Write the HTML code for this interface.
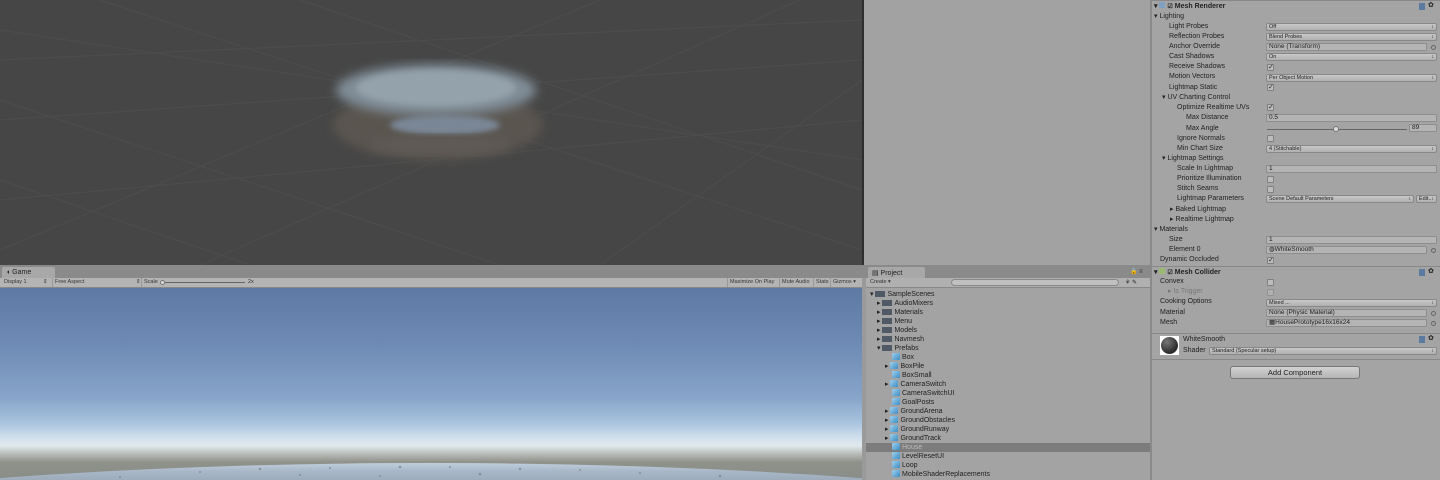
<!DOCTYPE html>
<html><head><meta charset="utf-8"><style>
*{margin:0;padding:0;box-sizing:border-box}
html,body{width:1440px;height:480px;overflow:hidden}
body{background:#a2a2a2;font-family:"Liberation Sans",sans-serif;font-size:7px;color:#1e1e1e;position:relative}
.a{position:absolute;white-space:nowrap}
.lbl{position:absolute;white-space:nowrap;line-height:10px;font-size:7px;color:#222}
.fld{position:absolute;height:8px;background:#b4b4b4;border:1px solid #8e8e8e;border-radius:1px;font-size:6px;line-height:6px;padding-left:2px;color:#222}
.dd{position:absolute;height:8px;background:linear-gradient(#c8c8c8,#b0b0b0);border:1px solid #888;border-radius:2px;font-size:5.5px;line-height:6px;padding-left:2px;color:#222}
.dd:after{content:"↕";position:absolute;right:2px;top:0;font-size:5px}
.cb{position:absolute;width:7px;height:7px;background:#bdbdbd;border:1px solid #808080;border-radius:1px;font-size:7px;line-height:5px;color:#222;text-align:center}
.dot{position:absolute;width:5px;height:5px;border:1px solid #666;border-radius:50%}
.row{position:absolute;left:870px;font-size:7px;line-height:9px;white-space:nowrap;color:#1e1e1e}
.fold{display:inline-block;width:10px;height:6px;background:#505a66;margin-right:2px;vertical-align:-1px}
.cube{display:inline-block;width:8px;height:7px;background:linear-gradient(135deg,#9fd0ee,#3c8cc4);margin-right:2px;vertical-align:-1px;border-radius:1px}
#wrap{position:absolute;left:0;top:0;width:1440px;height:480px;overflow:hidden}
</style></head><body><div id="wrap">
<!-- Scene view -->
<div class="a" style="left:0;top:0;width:862px;height:265px;background:#464646;overflow:hidden">
<svg width="862" height="265" style="position:absolute;left:0;top:0">
<g stroke="#4d4d4d" stroke-width="1" fill="none">
<line x1="0" y1="60" x2="862" y2="20"/><line x1="0" y1="120" x2="862" y2="60"/><line x1="0" y1="200" x2="862" y2="120"/>
<line x1="0" y1="30" x2="862" y2="160"/><line x1="100" y1="0" x2="862" y2="250"/><line x1="300" y1="0" x2="862" y2="190"/>
<line x1="0" y1="100" x2="500" y2="265"/><line x1="0" y1="180" x2="250" y2="265"/>
<line x1="600" y1="0" x2="0" y2="250"/><line x1="800" y1="0" x2="200" y2="265"/><line x1="862" y1="80" x2="600" y2="265"/>
</g>
<defs><filter id="f"><feGaussianBlur stdDeviation="5"/></filter><filter id="g"><feGaussianBlur stdDeviation="3"/></filter></defs>
<ellipse cx="438" cy="125" rx="105" ry="35" fill="#5a5550" filter="url(#f)"/>
<ellipse cx="436" cy="90" rx="100" ry="26" fill="#7f8c96" filter="url(#f)"/>
<ellipse cx="436" cy="88" rx="80" ry="18" fill="#94a2ac" filter="url(#g)"/>
<ellipse cx="445" cy="125" rx="55" ry="10" fill="#7a8796" filter="url(#g)"/>
<ellipse cx="440" cy="145" rx="70" ry="10" fill="#5e5a56" filter="url(#f)"/>
</svg></div>
<div class="a" style="left:862px;top:0;width:2px;height:265px;background:#2e2e2e"></div>
<!-- tab bars -->
<div class="a" style="left:0;top:265px;width:866px;height:13px;background:#8a8a8a"></div>
<div class="a" style="left:2px;top:267px;width:53px;height:11px;background:#a8a8a8;border-radius:2px 2px 0 0;padding:2px 0 0 4px;font-size:7px">◖ Game</div>
<div class="a" style="left:0;top:278px;width:862px;height:10px;background:#b4b4b4;border-bottom:1px solid #888;font-size:5.5px;line-height:9px;color:#333">
<span class="a" style="left:4px">Display 1</span><span class="a" style="left:43px">⇕</span>
<span class="a" style="left:52px;border-left:1px solid #999;padding-left:2px">Free Aspect</span><span class="a" style="left:136px">⇕</span>
<span class="a" style="left:141px;border-left:1px solid #999;padding-left:2px">Scale</span>
<span class="a" style="left:160px;top:4px;width:85px;height:1px;background:#666"></span>
<span class="a" style="left:160px;top:2px;width:5px;height:5px;border-radius:50%;background:#ddd;border:1px solid #777"></span>
<span class="a" style="left:248px">2x</span>
<span class="a" style="left:727px;border-left:1px solid #999;padding-left:2px">Maximize On Play</span>
<span class="a" style="left:779px;border-left:1px solid #999;padding-left:2px">Mute Audio</span>
<span class="a" style="left:813px;border-left:1px solid #999;padding-left:2px">Stats</span>
<span class="a" style="left:830px;border-left:1px solid #999;padding-left:2px">Gizmos ▾</span>
</div>
<!-- Game view -->
<div class="a" style="left:0;top:288px;width:862px;height:192px;overflow:hidden;background:linear-gradient(#5e7aa4 0px,#6f8cb6 60px,#87a4c9 110px,#a9c4df 135px,#d6e4ee 152px,#e0e8ec 158px,#b8bcb8 166px,#8f918a 174px,#8a8c88 192px)">
<div class="a" style="left:-470px;top:175px;width:1800px;height:248px;border-radius:50%;background:linear-gradient(#c0cedc,#a8b8c8 8px,#9aa8b6 20px)"></div>
<svg class="a" style="left:0;top:175px" width="862" height="17"><g fill="#6c7680" opacity=".6">
<circle cx="120" cy="14" r="1"/><circle cx="200" cy="9" r="1"/><circle cx="260" cy="6" r="1.2"/><circle cx="330" cy="5" r="1"/><circle cx="400" cy="4" r="1.3"/><circle cx="450" cy="4" r="1"/><circle cx="520" cy="6" r="1.2"/><circle cx="580" cy="7" r="1"/><circle cx="640" cy="10" r="1"/><circle cx="720" cy="13" r="1.2"/><circle cx="300" cy="12" r="1"/><circle cx="480" cy="11" r="1.3"/><circle cx="380" cy="13" r="1"/></g></svg>
</div>
<div class="a" style="left:862px;top:278px;width:4px;height:202px;background:#9a9a9a"></div>
<!-- Project -->
<div class="a" style="left:866px;top:265px;width:284px;height:13px;background:#8a8a8a"></div>
<div class="a" style="left:868px;top:267px;width:57px;height:11px;background:#a8a8a8;border-radius:2px 2px 0 0;padding:2px 0 0 4px;font-size:7px">▤ Project</div>
<div class="a" style="left:1130px;top:268px;font-size:6px;color:#333">🔒 ≡</div>
<div class="a" style="left:866px;top:278px;width:284px;height:10px;background:#b0b0b0;border-bottom:1px solid #888"></div>
<div class="a" style="left:870px;top:279px;font-size:5.5px;color:#333">Create ▾</div>
<div class="a" style="left:951px;top:279px;width:168px;height:7px;border:1px solid #888;border-radius:4px;background:#c0c0c0"></div>
<div class="a" style="left:1125px;top:279px;font-size:6px">⚘ ✎</div>
<div class="a" style="left:866px;top:288px;width:284px;height:192px;background:#a3a3a3"></div>
<div class="a" style="left:866px;top:443px;width:284px;height:9px;background:#7c7c7c"></div>
<div class="row" style="top:290px">▾ <span class="fold"></span>SampleScenes</div>
<div class="row" style="left:877px;top:299px">▸ <span class="fold"></span>AudioMixers</div>
<div class="row" style="left:877px;top:308px">▸ <span class="fold"></span>Materials</div>
<div class="row" style="left:877px;top:317px">▸ <span class="fold"></span>Menu</div>
<div class="row" style="left:877px;top:326px">▸ <span class="fold"></span>Models</div>
<div class="row" style="left:877px;top:335px">▸ <span class="fold"></span>Navmesh</div>
<div class="row" style="left:877px;top:344px">▾ <span class="fold"></span>Prefabs</div>
<div class="row" style="left:892px;top:353px"><span class="cube"></span>Box</div>
<div class="row" style="left:885px;top:362px">▸ <span class="cube"></span>BoxPile</div>
<div class="row" style="left:892px;top:371px"><span class="cube"></span>BoxSmall</div>
<div class="row" style="left:885px;top:380px">▸ <span class="cube"></span>CameraSwitch</div>
<div class="row" style="left:892px;top:389px"><span class="cube"></span>CameraSwitchUI</div>
<div class="row" style="left:892px;top:398px"><span class="cube"></span>GoalPosts</div>
<div class="row" style="left:885px;top:407px">▸ <span class="cube"></span>GroundArena</div>
<div class="row" style="left:885px;top:416px">▸ <span class="cube"></span>GroundObstacles</div>
<div class="row" style="left:885px;top:425px">▸ <span class="cube"></span>GroundRunway</div>
<div class="row" style="left:885px;top:434px">▸ <span class="cube"></span>GroundTrack</div>
<div class="row" style="left:892px;top:443px;color:#bbb"><span class="cube"></span>House</div>
<div class="row" style="left:892px;top:452px"><span class="cube"></span>LevelResetUI</div>
<div class="row" style="left:892px;top:461px"><span class="cube"></span>Loop</div>
<div class="row" style="left:892px;top:470px"><span class="cube"></span>MobileShaderReplacements</div>
<!-- Inspector -->
<div class="a" style="left:1150px;top:0;width:2px;height:480px;background:#8a8a8a"></div>
<div class="a" style="left:1152px;top:0;width:288px;height:480px;background:#a4a4a4"></div>
<div class="a" style="left:1152px;top:0;width:288px;height:1px;background:#888"></div>
<div class="lbl" style="left:1154px;top:2px;font-weight:bold">▾ <span style="display:inline-block;width:6px;height:6px;background:#7fa0c0"></span> <span style="font-size:6px">☑</span> Mesh Renderer</div>
<div class="a" style="left:1419px;top:3px;width:6px;height:7px;background:#5a7aa0"></div><div class="a" style="left:1428px;top:1px;font-size:7px">✿</div>
<div class="lbl" style="left:1154px;top:12px">▾ Lighting</div>
<div class="lbl" style="left:1169px;top:22px">Light Probes</div><div class="dd" style="left:1266px;top:23px;width:171px">Off</div>
<div class="lbl" style="left:1169px;top:32px">Reflection Probes</div><div class="dd" style="left:1266px;top:33px;width:171px">Blend Probes</div>
<div class="lbl" style="left:1169px;top:42px">Anchor Override</div><div class="fld" style="left:1266px;top:43px;width:161px;font-size:6.5px">None (Transform)</div><div class="dot" style="left:1431px;top:45px"></div>
<div class="lbl" style="left:1169px;top:52px">Cast Shadows</div><div class="dd" style="left:1266px;top:53px;width:171px">On</div>
<div class="lbl" style="left:1169px;top:62px">Receive Shadows</div><div class="cb" style="left:1267px;top:64px">✓</div>
<div class="lbl" style="left:1169px;top:72px">Motion Vectors</div><div class="dd" style="left:1266px;top:74px;width:171px">Per Object Motion</div>
<div class="lbl" style="left:1169px;top:83px">Lightmap Static</div><div class="cb" style="left:1267px;top:84px">✓</div>
<div class="lbl" style="left:1162px;top:93px">▾ UV Charting Control</div>
<div class="lbl" style="left:1177px;top:103px">Optimize Realtime UVs</div><div class="cb" style="left:1267px;top:104px">✓</div>
<div class="lbl" style="left:1186px;top:113px">Max Distance</div><div class="fld" style="left:1266px;top:114px;width:171px;font-size:6.5px">0.5</div>
<div class="lbl" style="left:1186px;top:124px">Max Angle</div><div class="a" style="left:1267px;top:129px;width:140px;height:1px;background:#666"></div><div class="a" style="left:1333px;top:126px;width:6px;height:6px;border-radius:50%;background:#ddd;border:1px solid #777"></div><div class="fld" style="left:1409px;top:124px;width:28px;font-size:6.5px">89</div>
<div class="lbl" style="left:1177px;top:134px">Ignore Normals</div><div class="cb" style="left:1267px;top:135px"></div>
<div class="lbl" style="left:1177px;top:144px">Min Chart Size</div><div class="dd" style="left:1266px;top:145px;width:171px">4 (Stitchable)</div>
<div class="lbl" style="left:1162px;top:154px">▾ Lightmap Settings</div>
<div class="lbl" style="left:1177px;top:164px">Scale In Lightmap</div><div class="fld" style="left:1266px;top:165px;width:171px;font-size:6.5px">1</div>
<div class="lbl" style="left:1177px;top:174px">Prioritize Illumination</div><div class="cb" style="left:1267px;top:176px"></div>
<div class="lbl" style="left:1177px;top:184px">Stitch Seams</div><div class="cb" style="left:1267px;top:186px"></div>
<div class="lbl" style="left:1177px;top:194px">Lightmap Parameters</div><div class="dd" style="left:1266px;top:195px;width:148px">Scene Default Parameters</div><div class="dd" style="left:1416px;top:195px;width:21px">Edit..</div>
<div class="lbl" style="left:1170px;top:205px">▸ Baked Lightmap</div>
<div class="lbl" style="left:1170px;top:215px">▸ Realtime Lightmap</div>
<div class="lbl" style="left:1154px;top:225px">▾ Materials</div>
<div class="lbl" style="left:1169px;top:235px">Size</div><div class="fld" style="left:1266px;top:236px;width:171px;font-size:6.5px">1</div>
<div class="lbl" style="left:1169px;top:245px">Element 0</div><div class="fld" style="left:1266px;top:246px;width:161px;font-size:6.5px">◍WhiteSmooth</div><div class="dot" style="left:1431px;top:248px"></div>
<div class="lbl" style="left:1160px;top:255px">Dynamic Occluded</div><div class="cb" style="left:1267px;top:257px">✓</div>
<div class="a" style="left:1152px;top:266px;width:288px;height:1px;background:#888"></div>
<div class="lbl" style="left:1154px;top:268px;font-weight:bold">▾ <span style="display:inline-block;width:6px;height:6px;background:#9ab870"></span> <span style="font-size:6px">☑</span> Mesh Collider</div>
<div class="a" style="left:1419px;top:269px;width:6px;height:7px;background:#5a7aa0"></div><div class="a" style="left:1428px;top:267px;font-size:7px">✿</div>
<div class="lbl" style="left:1160px;top:277px">Convex</div><div class="cb" style="left:1267px;top:279px"></div>
<div class="lbl" style="left:1168px;top:287px;color:#777">▸ Is Trigger</div><div class="cb" style="left:1267px;top:289px;opacity:.5"></div>
<div class="lbl" style="left:1160px;top:297px">Cooking Options</div><div class="dd" style="left:1266px;top:299px;width:171px">Mixed ...</div>
<div class="lbl" style="left:1160px;top:308px">Material</div><div class="fld" style="left:1266px;top:309px;width:161px;font-size:6.5px">None (Physic Material)</div><div class="dot" style="left:1431px;top:311px"></div>
<div class="lbl" style="left:1160px;top:318px">Mesh</div><div class="fld" style="left:1266px;top:319px;width:161px;font-size:6.5px">▦HousePrototype16x16x24</div><div class="dot" style="left:1431px;top:321px"></div>
<div class="a" style="left:1152px;top:333px;width:288px;height:1px;background:#888"></div>
<div class="a" style="left:1160px;top:336px;width:19px;height:19px;background:#fff"></div>
<div class="a" style="left:1161px;top:337px;width:17px;height:17px;border-radius:50%;background:radial-gradient(circle at 35% 30%,#777,#2a2a2a 70%)"></div>
<div class="lbl" style="left:1183px;top:335px">WhiteSmooth</div>
<div class="lbl" style="left:1183px;top:346px">Shader</div><div class="dd" style="left:1209px;top:347px;width:228px">Standard (Specular setup)</div>
<div class="a" style="left:1419px;top:336px;width:6px;height:7px;background:#5a7aa0"></div><div class="a" style="left:1428px;top:334px;font-size:7px">✿</div>
<div class="a" style="left:1152px;top:359px;width:288px;height:1px;background:#888"></div>
<div class="a" style="left:1230px;top:366px;width:130px;height:13px;border:1px solid #777;border-radius:3px;background:linear-gradient(#d2d2d2,#b4b4b4);text-align:center;font-size:7.5px;line-height:11px;color:#222">Add Component</div>
</div></body></html>
